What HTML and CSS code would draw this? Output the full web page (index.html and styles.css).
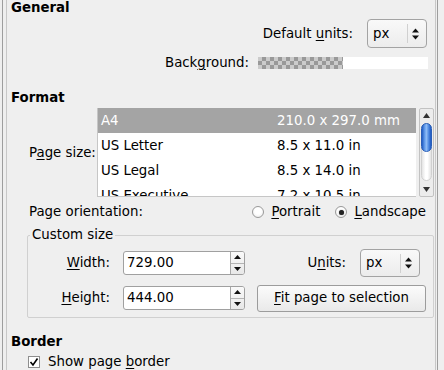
FILE: index.html
```html
<!DOCTYPE html>
<html>
<head>
<meta charset="utf-8">
<link rel="stylesheet" href="styles.css">
</head>
<body>
<div class="outer">
<div class="inner">
  <div class="heading">General</div>
  <div class="row units-row">
    <span class="lbl">Default <u>u</u>nits:</span>
    <div class="combo">
      <span class="combo-text">px</span>
      <span class="combo-sep"></span>
      <span class="combo-arrows"><svg width="7" height="12" viewBox="0 0 7 12"><path d="M3.5 0.5 L7 4.5 H0 Z M0 7.5 H7 L3.5 11.5 Z" fill="#111"/></svg></span>
    </div>
  </div>
  <div class="row bg-row">
    <span class="lbl">Back<u>g</u>round:</span>
    <div class="swatch"><div class="checker"></div><div class="white"></div></div>
  </div>

  <div class="heading format-h">Format</div>
  <div class="pagesize-row">
    <span class="ps-label">P<u>a</u>ge size:</span>
    <div class="listwrap">
      <div class="list">
        <div class="item sel"><span class="name">A4</span><span class="dim">210.0 x 297.0 mm</span></div>
        <div class="item"><span class="name">US Letter</span><span class="dim">8.5 x 11.0 in</span></div>
        <div class="item"><span class="name">US Legal</span><span class="dim">8.5 x 14.0 in</span></div>
        <div class="item"><span class="name">US Executive</span><span class="dim">7.2 x 10.5 in</span></div>
      </div>
      <div class="scrollbar">
        <div class="sb-btn"><svg width="7" height="5" viewBox="0 0 7 5"><path d="M3.5 0 L7 5 H0 Z" fill="#333"/></svg></div>
        <div class="sb-trough"><div class="sb-thumb"></div></div>
        <div class="sb-btn"><svg width="7" height="5" viewBox="0 0 7 5"><path d="M0 0 H7 L3.5 5 Z" fill="#333"/></svg></div>
      </div>
    </div>
  </div>
  <div class="orient-row">
    <span class="lbl">Page orientation:</span>
    <div class="radios">
      <span class="radio"><span class="rb"></span><span><u>P</u>ortrait</span></span>
      <span class="radio"><span class="rb on"></span><span><u>L</u>andscape</span></span>
    </div>
  </div>

  <fieldset class="custom">
    <legend>Custom size</legend>
    <div class="cgrid">
      <span class="clbl"><u>W</u>idth:</span>
      <div class="spin">
        <span class="spin-val">729.00</span>
        <span class="spin-btns">
          <span class="sbtn"><svg width="7" height="4" viewBox="0 0 7 4"><path d="M3.5 0 L7 4 H0 Z" fill="#111"/></svg></span>
          <span class="sbtn"><svg width="7" height="4" viewBox="0 0 7 4"><path d="M0 0 H7 L3.5 4 Z" fill="#111"/></svg></span>
        </span>
      </div>
      <div class="unitcell">
        <span class="lbl">U<u>n</u>its:</span>
        <div class="combo small">
          <span class="combo-text">px</span>
          <span class="combo-sep"></span>
          <span class="combo-arrows"><svg width="7" height="12" viewBox="0 0 7 12"><path d="M3.5 0.5 L7 4.5 H0 Z M0 7.5 H7 L3.5 11.5 Z" fill="#111"/></svg></span>
        </div>
      </div>
      <span class="clbl"><u>H</u>eight:</span>
      <div class="spin">
        <span class="spin-val">444.00</span>
        <span class="spin-btns">
          <span class="sbtn"><svg width="7" height="4" viewBox="0 0 7 4"><path d="M3.5 0 L7 4 H0 Z" fill="#111"/></svg></span>
          <span class="sbtn"><svg width="7" height="4" viewBox="0 0 7 4"><path d="M0 0 H7 L3.5 4 Z" fill="#111"/></svg></span>
        </span>
      </div>
      <div class="btn"><span><u>F</u>it page to selection</span></div>
    </div>
  </fieldset>

  <div class="heading border-h">Border</div>
  <div class="check-row">
    <span class="cb"><svg width="10" height="10" viewBox="0 0 10 10"><path d="M1.5 5 L4 8 L8.5 1.5" fill="none" stroke="#000" stroke-width="1.6"/></svg></span>
    <span>Show page <u>b</u>order</span>
  </div>
</div>
</div>
</body>
</html>
```

FILE: styles.css
```css
* { box-sizing: border-box; }
html, body { margin: 0; padding: 0; }
body {
  background: #efefef;
  font-family: "DejaVu Sans", "Noto Sans", sans-serif;
  font-size: 13.33px;
  line-height: 16px;
  color: #000;
  width: 444px;
  height: 370px;
  overflow: hidden;
}
u { text-decoration: underline; text-underline-offset: 2px; text-decoration-thickness: 1px; }

.outer {
  margin-left: 2px;
  width: 436px;
  height: 370px;
  border-left: 1px solid #9e9e9e;
  border-right: 1px solid #9e9e9e;
  padding: 0 1px 0 3px;
}
.inner {
  height: 100%;
  border-left: 1px solid #c8c8c8;
  border-right: 1px solid #c8c8c8;
}

.heading {
  font-weight: bold;
  padding-left: 4px;
  height: 16px;
}

.row {
  display: flex;
  justify-content: flex-end;
  align-items: center;
}
.lbl { white-space: nowrap; }

.units-row {
  margin-top: 3px;
  height: 29px;
  padding-right: 8px;
  gap: 14px;
}

.combo {
  width: 60px;
  height: 29px;
  border: 1px solid #a3a3a3;
  border-radius: 4px;
  background: linear-gradient(#f9f9f9, #ececec);
  display: flex;
  align-items: center;
}
.combo.small { height: 28px; }
.combo-text { flex: 1; padding-left: 5px; }
.combo-sep { width: 1px; height: 19px; background: #d0d0d0; }
.combo-arrows { width: 18px; display: flex; padding-left: 4px; }
.combo-arrows svg { display: block; }

.bg-row {
  margin-top: 9px;
  height: 12px;
  padding-right: 7px;
  gap: 9px;
}
.swatch { width: 170px; height: 12px; display: flex; }
.checker {
  width: 85px;
  height: 12px;
  background-color: #cbcbcb;
  background-image: conic-gradient(#999 25%, #cbcbcb 0 50%, #999 0 75%, #cbcbcb 0);
  background-size: 8px 8px;
}
.white { flex: 1; background: #fff; }

.format-h { margin-top: 21px; }

.pagesize-row {
  margin-top: 2px;
  display: flex;
  align-items: center;
  padding-left: 22px;
  padding-right: 1px;
}
.ps-label { width: 68px; white-space: nowrap; }
.listwrap {
  flex: 1;
  height: 89px;
  display: flex;
  gap: 3px;
}
.list {
  flex: 1;
  background: #fff;
  border-left: 1px solid #c6c6c6;
  border-bottom: 1px solid #c6c6c6;
  overflow: hidden;
}
.item {
  height: 25px;
  line-height: 25px;
  display: flex;
  padding-left: 3px;
  white-space: nowrap;
}
.item.sel { background: #a4a4a4; color: #fff; }
.name { width: 176px; }

.scrollbar {
  width: 15px;
  border: 1px solid #c2c2c2;
  border-radius: 2px;
  background: #ececec;
  display: flex;
  flex-direction: column;
}
.sb-btn {
  height: 13px;
  display: flex;
  align-items: center;
  justify-content: center;
}
.sb-trough {
  flex: 1;
  margin: 1px 1px 2px;
  border-radius: 6px;
  border: 1px solid #d0d0d0;
  background: linear-gradient(90deg, #e4e4e4, #ffffff 40%, #ffffff 60%, #e2e2e2);
  display: flex;
  flex-direction: column;
}
.sb-thumb {
  height: 29px;
  margin: -1px;
  border-radius: 6px;
  border: 1px solid #2a5fb8;
  background: linear-gradient(90deg, #1f5cc4, #6fa6f0 35%, #8cbaf5 50%, #4c88e0 75%, #1d58c0);
}

.orient-row {
  height: 30px;
  display: flex;
  align-items: center;
  justify-content: space-between;
  padding-left: 22px;
  padding-right: 9px;
}
.radios { display: flex; gap: 15px; }
.radio { display: flex; align-items: center; gap: 7px; }
.rb {
  width: 12px;
  height: 12px;
  border-radius: 50%;
  border: 1px solid #9a9a9a;
  background: radial-gradient(circle at 50% 40%, #ffffff 40%, #e6e6e6 100%);
  display: flex;
  align-items: center;
  justify-content: center;
}
.rb.on::after {
  content: "";
  width: 5px;
  height: 5px;
  border-radius: 50%;
  background: #222;
  box-shadow: 0 0 1px #555;
}

.custom {
  margin: 0 1px 0 20px;
  border: 1px solid #d0d0d0;
  border-radius: 2px;
  padding: 6px 7px 5px 0;
  min-inline-size: 0;
}
.custom legend {
  padding: 0 2px;
  margin-left: 2px;
  line-height: 16px;
}
.cgrid {
  display: grid;
  grid-template-columns: 95px 134px 169px;
  grid-template-rows: 28px 28px;
  row-gap: 7px;
  align-items: center;
}
.clbl { text-align: right; padding-right: 13px; white-space: nowrap; }
.spin {
  width: 122px;
  height: 24px;
  display: flex;
  border: 1px solid #a0a0a0;
  border-radius: 3px;
  background: #fff;
  overflow: hidden;
}
.spin-val { flex: 1; padding-left: 3px; line-height: 22px; }
.spin-btns {
  width: 14px;
  border-left: 1px solid #a8a8a8;
  display: flex;
  flex-direction: column;
  background: linear-gradient(#fafafa, #e8e8e8);
}
.sbtn {
  flex: 1;
  display: flex;
  align-items: center;
  justify-content: center;
}
.sbtn + .sbtn { border-top: 1px solid #b4b4b4; }

.unitcell {
  display: flex;
  align-items: center;
  justify-content: flex-end;
  padding-right: 6px;
  gap: 14px;
}
.btn {
  height: 27px;
  border: 1px solid #9c9c9c;
  border-radius: 3px;
  background: linear-gradient(#fbfbfb, #e9e9e9);
  display: flex;
  align-items: center;
  justify-content: center;
  white-space: nowrap;
}

.border-h { margin-top: 16px; }
.check-row {
  margin-top: 4px;
  height: 16px;
  display: flex;
  align-items: center;
  padding-left: 21px;
  gap: 8px;
}
.cb {
  width: 12px;
  height: 12px;
  border: 1px solid #8e8e8e;
  background: #fff;
  display: flex;
  align-items: center;
  justify-content: center;
}
.cb svg { display: block; }
```
